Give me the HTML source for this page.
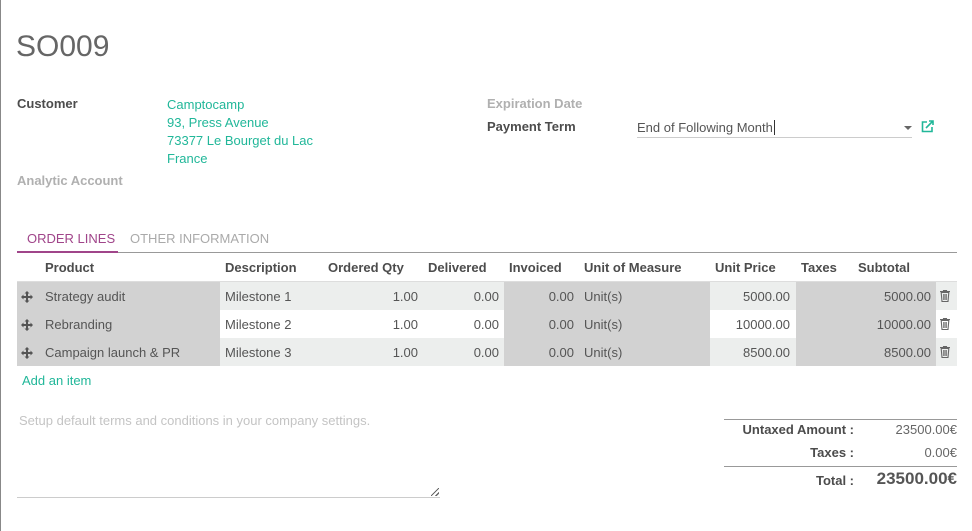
<!DOCTYPE html>
<html><head><meta charset="utf-8"><style>
*{margin:0;padding:0;box-sizing:border-box}
body{width:972px;height:531px;background:#fff;font-family:"Liberation Sans",sans-serif;font-size:13px;color:#666;position:relative;overflow:hidden}
.a{position:absolute;white-space:nowrap}
.lbl{font-weight:bold;color:#4c4c4c}
.lg{font-weight:bold;color:#b0b0b0}
.g{color:#21b799}
.r{text-align:right}
.row{position:absolute;left:17px;width:940px;height:28px}
.cell{position:absolute;top:1px;height:28px;line-height:28px;white-space:nowrap}
.gray{background:#d2d2d2}
.th{font-weight:bold;color:#4c4c4c;top:260px;position:absolute}
.mv{position:absolute;left:21px;top:9px}
.tr{position:absolute;left:940px;top:8px}
</style></head><body>
<div class="a" style="left:0;top:0;width:1px;height:531px;background:#888"></div>
<div class="a" style="left:16px;top:30px;font-size:30px;color:#666">SO009</div>

<div class="a lbl" style="left:17px;top:96px">Customer</div>
<div class="a g" style="left:167px;top:96px;line-height:18px">Camptocamp<br>93, Press Avenue<br>73377 Le Bourget du Lac<br>France</div>
<div class="a lg" style="left:17px;top:173px">Analytic Account</div>

<div class="a lg" style="left:487px;top:96px">Expiration Date</div>
<div class="a lbl" style="left:487px;top:119px">Payment Term</div>
<div class="a" style="left:637px;top:120px;color:#555">End of Following Month<span style="border-left:1px solid #333;margin-left:1px"></span></div>
<div class="a" style="left:637px;top:137px;width:275px;height:1px;background:#ccc"></div>
<div class="a" style="left:904px;top:126px;width:0;height:0;border-left:4px solid transparent;border-right:4px solid transparent;border-top:4px solid #666"></div>
<svg class="a" style="left:921px;top:120px" width="13" height="13" viewBox="0 0 13 13"><path d="M6 2H1.5v9.5H11V7" fill="none" stroke="#21b799" stroke-width="1.6"/><path d="M5 8L12 1M8 1h4v4" fill="none" stroke="#21b799" stroke-width="1.6"/></svg>

<div class="a" style="left:27px;top:231px;color:#a0458a">ORDER LINES</div>
<div class="a" style="left:130px;top:231px;color:#aaa">OTHER INFORMATION</div>
<div class="a" style="left:17px;top:252px;width:940px;height:1px;background:#999"></div>
<div class="a" style="left:17px;top:251px;width:101px;height:2px;background:#a0458a"></div>

<div class="th" style="left:45px">Product</div>
<div class="th" style="left:225px">Description</div>
<div class="th" style="left:328px">Ordered Qty</div>
<div class="th" style="left:428px">Delivered</div>
<div class="th" style="left:509px">Invoiced</div>
<div class="th" style="left:584px">Unit of Measure</div>
<div class="th" style="left:715px">Unit Price</div>
<div class="th" style="left:801px">Taxes</div>
<div class="th" style="left:858px">Subtotal</div>
<div class="a" style="left:17px;top:281px;width:940px;height:1px;background:#ddd"></div>

<div class="row" style="top:282px;background:#eceeed"></div>
<div class="row" style="top:310px;background:#fff"></div>
<div class="row" style="top:338px;background:#eceeed"></div>
<div class="a gray" style="left:17px;top:282px;width:203px;height:84px"></div>
<div class="a gray" style="left:504px;top:282px;width:206px;height:84px"></div>
<div class="a gray" style="left:796px;top:282px;width:140px;height:84px"></div>

<svg width="0" height="0" style="position:absolute"><defs>
<symbol id="mv" viewBox="0 0 12 12"><path d="M6 0L8.5 2.5H7V5H9.5V3.5L12 6L9.5 8.5V7H7V9.5H8.5L6 12L3.5 9.5H5V7H2.5V8.5L0 6L2.5 3.5V5H5V2.5H3.5Z" fill="#555"/></symbol>
<symbol id="tr" viewBox="0 0 10 12"><path d="M0 1.5h10M3.5 1.5V0.5h3v1M1.2 2.5h7.6L8 11.5H2Z" fill="none" stroke="#666" stroke-width="1.1"/><path d="M3.7 4v6M5 4v6M6.3 4v6" stroke="#666" stroke-width="0.9"/></symbol>
</defs></svg>

<div style="position:absolute;top:282px;left:0;width:972px;color:#555">
 <div style="position:absolute;top:0;left:0;width:972px;height:28px">
  <svg class="mv" width="12" height="12"><use href="#mv"/></svg><div class="cell" style="left:45px">Strategy audit</div><div class="cell" style="left:225px">Milestone 1</div>
  <div class="cell r" style="right:554px">1.00</div><div class="cell r" style="right:473px">0.00</div><div class="cell r" style="right:398px">0.00</div><div class="cell" style="left:584px">Unit(s)</div>
  <div class="cell r" style="right:182px">5000.00</div><div class="cell r" style="right:41px">5000.00</div><svg class="tr" width="10" height="12"><use href="#tr"/></svg>
 </div>
 <div style="position:absolute;top:28px;left:0;width:972px;height:28px">
  <svg class="mv" width="12" height="12"><use href="#mv"/></svg><div class="cell" style="left:45px">Rebranding</div><div class="cell" style="left:225px">Milestone 2</div>
  <div class="cell r" style="right:554px">1.00</div><div class="cell r" style="right:473px">0.00</div><div class="cell r" style="right:398px">0.00</div><div class="cell" style="left:584px">Unit(s)</div>
  <div class="cell r" style="right:182px">10000.00</div><div class="cell r" style="right:41px">10000.00</div><svg class="tr" width="10" height="12"><use href="#tr"/></svg>
 </div>
 <div style="position:absolute;top:56px;left:0;width:972px;height:28px">
  <svg class="mv" width="12" height="12"><use href="#mv"/></svg><div class="cell" style="left:45px">Campaign launch &amp; PR</div><div class="cell" style="left:225px">Milestone 3</div>
  <div class="cell r" style="right:554px">1.00</div><div class="cell r" style="right:473px">0.00</div><div class="cell r" style="right:398px">0.00</div><div class="cell" style="left:584px">Unit(s)</div>
  <div class="cell r" style="right:182px">8500.00</div><div class="cell r" style="right:41px">8500.00</div><svg class="tr" width="10" height="12"><use href="#tr"/></svg>
 </div>
</div>
<div class="a g" style="left:22px;top:373px">Add an item</div>

<div class="a" style="left:19px;top:413px;color:#c4c4c4">Setup default terms and conditions in your company settings.</div>
<div class="a" style="left:17px;top:497px;width:423px;height:1px;background:#ccc"></div>
<div class="a" style="left:431px;top:488px;width:8px;height:8px;background:linear-gradient(135deg,transparent 45%,#666 45%,#666 55%,transparent 55%,transparent 75%,#666 75%,#666 85%,transparent 85%)"></div>

<div class="a" style="left:724px;top:419px;width:233px;height:1px;background:#999"></div>
<div class="a lbl r" style="right:118px;top:422px">Untaxed Amount :</div>
<div class="a r" style="right:15px;top:422px">23500.00€</div>
<div class="a lbl r" style="right:118px;top:445px">Taxes :</div>
<div class="a r" style="right:15px;top:445px">0.00€</div>
<div class="a" style="left:724px;top:466px;width:233px;height:1px;background:#999"></div>
<div class="a lbl r" style="right:118px;top:473px">Total :</div>
<div class="a r" style="right:15px;top:469px;font-size:17px;font-weight:bold;color:#555">23500.00€</div>
</body></html>
